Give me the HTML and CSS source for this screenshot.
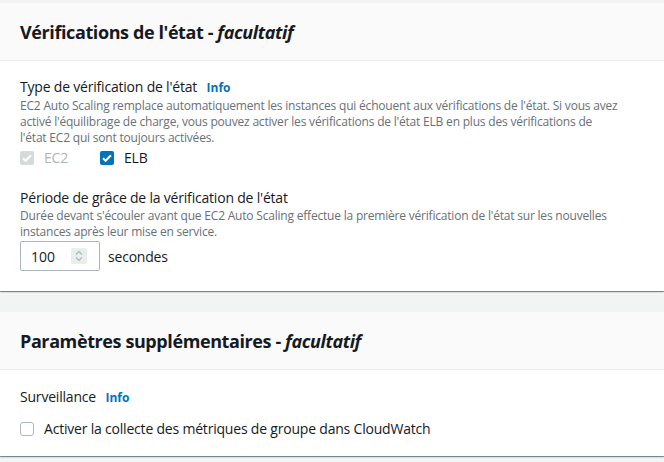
FILE: index.html
```html
<!DOCTYPE html>
<html lang="fr">
<head>
<meta charset="utf-8">
<link rel="stylesheet" href="styles.css">
</head>
<body>
<section class="card card-first">
  <header class="card-header"><h2>Vérifications de l'état - <i>facultatif</i></h2></header>
  <div class="card-body">
    <div class="field">
      <div class="label">Type de vérification de l'état <a class="info">Info</a></div>
      <p class="desc">EC2 Auto Scaling remplace automatiquement les instances qui échouent aux vérifications de l'état. Si vous avez activé l'équilibrage de charge, vous pouvez activer les vérifications de l'état ELB en plus des vérifications de<br>l'état EC2 qui sont toujours activées.</p>
      <div class="checks">
        <label class="check disabled"><span class="box box-disabled"><svg viewBox="0 0 14 14" width="14" height="14"><path d="M3 7.2l2.6 2.6L11 4.2" fill="none" stroke="#fff" stroke-width="2"/></svg></span>EC2</label>
        <label class="check"><span class="box box-checked"><svg viewBox="0 0 14 14" width="14" height="14"><path d="M3 7.2l2.6 2.6L11 4.2" fill="none" stroke="#fff" stroke-width="2"/></svg></span>ELB</label>
      </div>
    </div>
    <div class="field field2">
      <div class="label">Période de grâce de la vérification de l'état</div>
      <p class="desc">Durée devant s'écouler avant que EC2 Auto Scaling effectue la première vérification de l'état sur les nouvelles instances après leur mise en service.</p>
      <div class="input-row">
        <div class="num-input"><span class="num">100</span><span class="spin"><svg viewBox="0 0 16 16" width="16" height="16"><path d="M5 6.5l3-3 3 3M5 9.5l3 3 3-3" fill="none" stroke="#aab7b8" stroke-width="1.2"/></svg></span></div>
        <span class="unit">secondes</span>
      </div>
    </div>
  </div>
</section>
<section class="card card-second">
  <header class="card-header"><h2>Paramètres supplémentaires - <i>facultatif</i></h2></header>
  <div class="card-body body2">
    <div class="label">Surveillance <a class="info">Info</a></div>
    <label class="check check-single"><span class="box box-empty"></span>Activer la collecte des métriques de groupe dans CloudWatch</label>
  </div>
</section>
</body>
</html>
```
FILE: styles.css
```css
html, body { margin: 0; padding: 0; }
body {
  background: #f2f3f3;
  font-family: "Open Sans", "Noto Sans", sans-serif;
  color: #16191f;
  width: 664px;
  height: 462px;
  overflow: hidden;
}
.card {
  background: #fff;
  box-shadow: 0 1px 1px 0 rgba(0,28,36,.3), 1px 1px 1px 0 rgba(0,28,36,.15), -1px 1px 1px 0 rgba(0,28,36,.15);
}
.card-first { margin-top: 3px; }
.card-second { margin-top: 21px; }
.card-header {
  background: #fafafa;
  border-bottom: 1px solid #eaeded;
  height: 57px;
  display: flex;
  align-items: center;
  padding: 0 20px;
}
.card-header h2 {
  margin: 0;
  font-size: 18px;
  font-weight: 700;
  line-height: 22px;
  letter-spacing: -0.4px;
}
.card-header h2 i { font-style: italic; }
.card-body { padding: 16px 20px 20px; }
.label {
  font-size: 14px;
  line-height: 20px;
  color: #16191f;
  letter-spacing: -0.2px;
}
.info {
  color: #0073bb;
  font-weight: 700;
  font-size: 12px;
  margin-left: 6px;
  letter-spacing: 0;
}
.desc {
  margin: 0;
  font-size: 12px;
  line-height: 16px;
  color: #687078;
  width: 620px;
  letter-spacing: -0.2px;
}
.checks { display: flex; gap: 0; margin-top: 2px; }
.check {
  display: flex;
  align-items: center;
  font-size: 14px;
  line-height: 20px;
  color: #16191f;
  letter-spacing: -0.2px;
}
.check.disabled { color: #aab7b8; width: 80px; }
.box {
  width: 14px;
  height: 14px;
  border-radius: 2px;
  margin-right: 10px;
  box-sizing: border-box;
  display: flex;
  flex: none;
}
.box-disabled { background: #d5dbdb; }
.box-checked { background: #0073bb; }
.box-empty { border: 1px solid #aab7b8; border-radius: 3px; background: #fff; }
.field2 { margin-top: 20px; }
.input-row { display: flex; align-items: center; margin-top: 1px; }
.num-input {
  width: 80px;
  height: 30px;
  box-sizing: border-box;
  border: 1px solid #aab7b8;
  border-radius: 2px;
  display: flex;
  align-items: center;
  padding-left: 10px;
  font-size: 14px;
}
.num { width: 40px; }
.spin {
  width: 16px;
  height: 16px;
  background: #eaeded;
  border-radius: 2px;
  display: flex;
}
.unit { font-size: 14px; margin-left: 8px; letter-spacing: -0.2px; }
.body2 { padding-top: 17px; padding-bottom: 17px; }
.check-single { margin-top: 11px; }
```
